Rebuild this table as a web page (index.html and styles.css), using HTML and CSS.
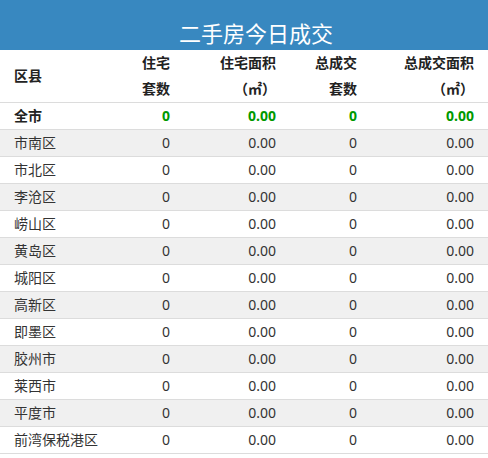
FILE: index.html
```html
<!DOCTYPE html>
<html lang="zh-CN">
<head>
<meta charset="utf-8">
<title>二手房今日成交</title>
<link rel="stylesheet" href="styles.css">
</head>
<body>
<div class="panel">
  <div class="title">二手房今日成交</div>
  <table class="stats">
    <colgroup>
      <col class="c0"><col class="c1"><col class="c2"><col class="c3"><col class="c4">
    </colgroup>
    <thead>
      <tr>
        <th class="name">区县</th>
        <th>住宅<br>套数</th>
        <th>住宅面积<br>（㎡）</th>
        <th>总成交<br>套数</th>
        <th>总成交面积<br>（㎡）</th>
      </tr>
    </thead>
    <tbody>
      <tr class="total"><td class="name">全市</td><td>0</td><td>0.00</td><td>0</td><td>0.00</td></tr>
      <tr><td class="name">市南区</td><td>0</td><td>0.00</td><td>0</td><td>0.00</td></tr>
      <tr><td class="name">市北区</td><td>0</td><td>0.00</td><td>0</td><td>0.00</td></tr>
      <tr><td class="name">李沧区</td><td>0</td><td>0.00</td><td>0</td><td>0.00</td></tr>
      <tr><td class="name">崂山区</td><td>0</td><td>0.00</td><td>0</td><td>0.00</td></tr>
      <tr><td class="name">黄岛区</td><td>0</td><td>0.00</td><td>0</td><td>0.00</td></tr>
      <tr><td class="name">城阳区</td><td>0</td><td>0.00</td><td>0</td><td>0.00</td></tr>
      <tr><td class="name">高新区</td><td>0</td><td>0.00</td><td>0</td><td>0.00</td></tr>
      <tr><td class="name">即墨区</td><td>0</td><td>0.00</td><td>0</td><td>0.00</td></tr>
      <tr><td class="name">胶州市</td><td>0</td><td>0.00</td><td>0</td><td>0.00</td></tr>
      <tr><td class="name">莱西市</td><td>0</td><td>0.00</td><td>0</td><td>0.00</td></tr>
      <tr><td class="name">平度市</td><td>0</td><td>0.00</td><td>0</td><td>0.00</td></tr>
      <tr><td class="name">前湾保税港区</td><td>0</td><td>0.00</td><td>0</td><td>0.00</td></tr>
    </tbody>
  </table>
</div>
</body>
</html>
```
FILE: styles.css
```css
html, body {
  margin: 0;
  padding: 0;
  background: #fff;
}

body {
  font-family: "Noto Sans", "Noto Sans CJK SC", sans-serif;
  font-size: 14px;
  color: #333;
}

.panel {
  width: 488px;
}

.title {
  background: #3888c0;
  color: #fff;
  font-size: 22px;
  height: 50px;
  box-sizing: border-box;
  padding: 15px 0 0 24px;
  line-height: 34px;
  text-align: center;
  font-family: "Noto Sans CJK SC", sans-serif;
}

.stats {
  width: 488px;
  border-collapse: separate;
  border-spacing: 0;
  table-layout: fixed;
}

.c0 { width: 120px; }
.c1 { width: 58px; }
.c2 { width: 106px; }
.c3 { width: 81px; }
.c4 { width: 123px; }

.stats th,
.stats td {
  padding: 0 8px 0 0;
  text-align: right;
  white-space: nowrap;
  border-bottom: 1px solid #dcdcdc;
}

.stats th {
  font-weight: bold;
  color: #222;
  line-height: 26px;
  height: 52px;
  vertical-align: middle;
}

.stats td {
  height: 26px;
  line-height: 26px;
}

.stats .name {
  text-align: left;
  padding-left: 14px;
}

.stats th:last-child,
.stats td:last-child { padding-right: 14px; }

.stats tbody tr:nth-child(even) td {
  background: #f0f0f0;
}

.stats tr.total td {
  font-weight: bold;
  color: #090;
}

.stats tr.total td.name {
  color: #222;
}
```
